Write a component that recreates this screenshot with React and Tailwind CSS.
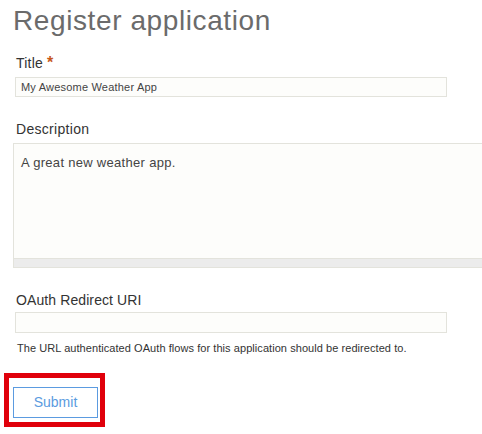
export default function App() {
  return (
    <div className="w-[482px] h-[434px] bg-white overflow-hidden font-['Liberation_Sans',Arial,sans-serif] text-[#333]">
      <h1 className="pl-[13px] pt-[4px] text-[28px] leading-[34px] tracking-[0.6px] text-[#6b6b6b] font-normal">Register application</h1>
      <div className="mt-[17px] pl-[16px] text-[14px] leading-[16px] tracking-[0.2px] text-[#333]">
        Title <span className="text-[16px] font-bold leading-[16px] text-[#c7581b]">*</span>
      </div>
      <div className="mt-[6px] ml-[15px] w-[432px] h-[20px] border border-[#e3e3dc] bg-[#fdfdfb] flex items-center pl-[5px] text-[11px] tracking-[0.2px] text-[#444]">
        My Awesome Weather App
      </div>
      <div className="mt-[24px] pl-[16px] text-[14px] leading-[16px] tracking-[0.3px] text-[#333]">Description</div>
      <div className="mt-[6px] ml-[13px] w-[490px] border border-[#e3e3dc] bg-[#fdfdfb]">
        <div className="h-[114px] pl-[7px] pt-[11px] text-[13px] leading-[16px] tracking-[0.3px] text-[#444]">A great new weather app.</div>
        <div className="h-[9px] bg-[#ececec] border-t border-[#e3e3dc]"></div>
      </div>
      <div className="mt-[24px] pl-[16px] text-[14px] leading-[16px] tracking-[0.1px] text-[#333]">OAuth Redirect URI</div>
      <div className="mt-[4px] ml-[15px] w-[432px] h-[21px] border border-[#e3e3dc] bg-[#fdfdfb]"></div>
      <div className="mt-[9px] pl-[17px] text-[11px] leading-[13px] tracking-[0.06px] text-[#333]">
        The URL authenticated OAuth flows for this application should be redirected to.
      </div>
      <div className="mt-[18px] ml-[4px] w-[101px] h-[54px] border-[5px] border-[#e0000b] pl-[4px] pt-[9px]">
        <button className="w-[85px] h-[31px] border border-[#5b9be0] bg-white text-[#5b9be0] text-[14px]">Submit</button>
      </div>
    </div>
  );
}
